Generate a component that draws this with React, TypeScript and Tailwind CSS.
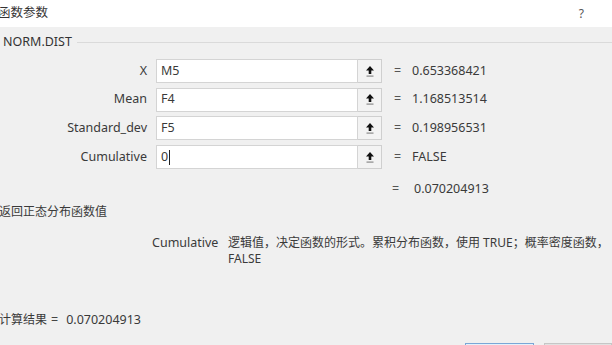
import React from 'react';

const FONT = '"Noto Sans", "Noto Sans CJK SC", sans-serif';

const args = [
  { label: 'X', value: 'M5', result: '0.653368421' },
  { label: 'Mean', value: 'F4', result: '1.168513514' },
  { label: 'Standard_dev', value: 'F5', result: '0.198956531' },
  { label: 'Cumulative', value: '0', result: 'FALSE', caret: true },
];

function RefIcon() {
  return (
    <svg width="10" height="13" viewBox="0 0 10 13">
      <path d="M5 1 L9 5.5 L6.3 5.5 L6.3 9 L3.7 9 L3.7 5.5 L1 5.5 Z" fill="#111" />
      <rect x="1.5" y="10.5" width="7" height="1.2" fill="#8a8a8a" />
    </svg>
  );
}

function ArgRow({ label, value, result, caret }: { label: string; value: string; result: string; caret?: boolean }) {
  return (
    <div className="flex items-center h-[24px]">
      <div className="w-[148px] text-right text-[12.5px] pr-[1px]">{label}</div>
      <div className="ml-[8px] flex h-[24px]">
        <div className="w-[202px] bg-white border border-[#d4d4d4] flex items-center pl-[4px] text-[12.5px]">
          {value}
          {caret && <span className="inline-block w-px h-[15px] bg-[#222] ml-[1px]" />}
        </div>
        <div className="w-[24px] bg-[#f3f3f3] border border-[#cfcfcf] border-l-0 flex items-center justify-center">
          <RefIcon />
        </div>
      </div>
      <div className="ml-[12px] w-[18px] text-[12.5px] text-[#555]">=</div>
      <div className="text-[12.5px]">{result}</div>
    </div>
  );
}

export default function App() {
  return (
    <div
      className="w-[612px] h-[345px] overflow-hidden bg-[#f0f0f0] text-[#3a3a3a] flex flex-col"
      style={{ fontFamily: FONT }}
    >
      {/* title bar */}
      <div className="h-[27px] bg-white flex items-center justify-between shrink-0">
        <span className="ml-[-2px] text-[12.5px] text-[#333]">函数参数</span>
        <span className="mr-[28px] text-[12px] text-[#555]">?</span>
      </div>

      {/* group header */}
      <div className="h-[30px] flex items-center shrink-0">
        <span className="ml-[3px] text-[12.5px] text-[#333]">NORM.DIST</span>
        <div className="flex-1 h-px bg-[#dadada] ml-[5px]" />
      </div>

      {/* arguments */}
      <div className="flex flex-col gap-[4.7px] mt-[2px]">
        {args.map((a) => (
          <ArgRow key={a.label} {...a} />
        ))}
      </div>

      <div className="h-px bg-[#dedede] mt-[6px]" />

      <div className="flex items-center h-[26px] mt-[5px]">
        <div className="ml-[392px] w-[22px] text-[12.5px] text-[#555]">=</div>
        <div className="text-[12.5px]">0.070204913</div>
      </div>

      <div className="h-[18px] flex items-center mt-[4px]">
        <span className="ml-[-1px] text-[12px]">返回正态分布函数值</span>
      </div>

      <div className="flex mt-[14px] whitespace-nowrap">
        <div className="ml-[152px] w-[76px] text-[12.5px] leading-[16px]">Cumulative</div>
        <div className="flex flex-col text-[12px] leading-[16px]">
          <span>逻辑值，决定函数的形式。累积分布函数，使用 TRUE；概率密度函数，</span>
          <span>FALSE</span>
        </div>
      </div>

      <div className="h-px bg-[#e2e2e2] mt-[29px]" />

      <div className="flex items-center h-[20px] mt-[15px] whitespace-nowrap">
        <span className="ml-[-1px] text-[12px]">计算结果</span>
        <span className="ml-[4px] text-[12.5px] text-[#444]">=</span>
        <span className="ml-[8px] text-[12.5px]">0.070204913</span>
      </div>

      {/* buttons (cut off at bottom) */}
      <div className="flex mt-[13px] ml-[465px] gap-[10px] shrink-0">
        <div className="w-[80px] h-[24px] bg-[#e5f1fb] border border-[#7aa7d6]" />
        <div className="w-[80px] h-[24px] bg-[#e1e1e1] border border-[#c6c6c6]" />
      </div>
    </div>
  );
}
